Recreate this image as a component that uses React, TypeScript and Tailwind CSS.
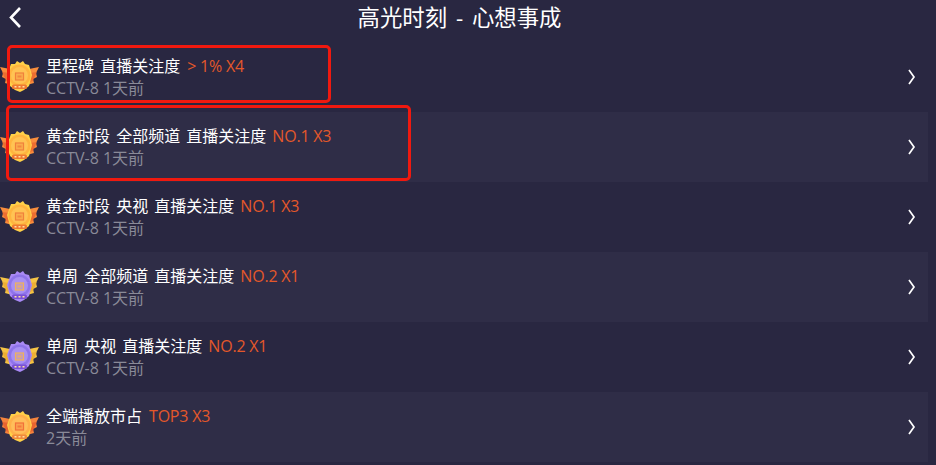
import React from "react";

type Tone = "gold" | "purple" | "sun";

const palette: Record<Tone, { wing: string; wingDark: string; rim: string; face: string; inner: string; band: string; glyph: string }> = {
  gold: { wing: "#f98d3c", wingDark: "#e8602c", rim: "#ffd048", face: "#ffb43f", inner: "#ffc353", band: "#f07a32", glyph: "#f0803c" },
  purple: { wing: "#f6c445", wingDark: "#e9a52e", rim: "#a989f5", face: "#8f74ea", inner: "#a890f3", band: "#7b52d6", glyph: "#f0b25a" },
  sun: { wing: "#f5843d", wingDark: "#e2572b", rim: "#ffd048", face: "#ffb04a", inner: "#ffbe5a", band: "#f08a3c", glyph: "#f2703a" },
};

function Medal({ tone }: { tone: Tone }) {
  const c = palette[tone];
  return (
    <svg width="40" height="36" viewBox="0 0 40 36" className="shrink-0">
      <path d="M0 8 L10 10 L12 26 L5 24 L6 20 L2 18 L3 14 Z" fill={c.wing} />
      <path d="M2 13 L10 14 L11 24 L6 22 Z" fill={c.wingDark} opacity="0.7" />
      <path d="M39 8 L29 10 L27 26 L34 24 L33 20 L37 18 L36 14 Z" fill={c.wing} />
      <path d="M37 13 L29 14 L28 24 L33 22 Z" fill={c.wingDark} opacity="0.7" />
      <path d="M11 5 L15 5 L17 2 L20 4 L23 2 L25 5 L29 6 L32 16 L29 27 L24 31 L20 33 L15 31 L10 27 L7 16 Z" fill={c.rim} />
      <circle cx="19.5" cy="16.5" r="11" fill={c.face} />
      <circle cx="19.5" cy="16.5" r="8.5" fill={c.inner} />
      <rect x="15.5" y="14" width="8" height="7" fill={c.glyph} fillOpacity="0.35" stroke={c.glyph} strokeWidth="1.2" />
      <rect x="17.5" y="16.5" width="4" height="2" fill={c.glyph} opacity="0.8" />
      <rect x="12" y="25.5" width="15" height="4.5" rx="1.5" fill={c.band} />
      <rect x="14.5" y="27" width="2" height="1.5" fill="#ffe0a0" />
      <rect x="18.5" y="27" width="2" height="1.5" fill="#ffe0a0" />
      <rect x="22.5" y="27" width="2" height="1.5" fill="#ffe0a0" />
    </svg>
  );
}

const rows: { title: string; tag: string; sub: string; tone: Tone; tagGap: string }[] = [
  { title: "里程碑 直播关注度", tag: "> 1% X4", sub: "CCTV-8 1天前", tone: "gold", tagGap: "ml-[7px]" },
  { title: "黄金时段 全部频道 直播关注度", tag: "NO.1 X3", sub: "CCTV-8 1天前", tone: "gold", tagGap: "ml-[6px]" },
  { title: "黄金时段 央视 直播关注度", tag: "NO.1 X3", sub: "CCTV-8 1天前", tone: "gold", tagGap: "ml-[6px]" },
  { title: "单周 全部频道 直播关注度", tag: "NO.2 X1", sub: "CCTV-8 1天前", tone: "purple", tagGap: "ml-[6px]" },
  { title: "单周 央视 直播关注度", tag: "NO.2 X1", sub: "CCTV-8 1天前", tone: "purple", tagGap: "ml-[6px]" },
  { title: "全端播放市占", tag: "TOP3 X3", sub: "2天前", tone: "sun", tagGap: "ml-[7px]" },
];

export default function App() {
  return (
    <div className="relative h-[465px] w-[936px] overflow-hidden bg-[#292741] font-['Open_Sans','Noto_Sans_CJK_SC',sans-serif] text-white">
      <header className="relative flex h-[42px] items-start justify-center pr-[17px]">
        <svg width="16" height="24" viewBox="0 0 16 24" className="absolute left-[7px] top-[4px]">
          <path d="M13 4 L4 13.5 L13 23" fill="none" stroke="white" strokeWidth="2.6" />
        </svg>
        <h1 className="text-[22.4px] leading-[36px] font-normal [word-spacing:3px]">高光时刻 - 心想事成</h1>
      </header>
      <ul className="w-[928px]">
        {rows.map((r, i) => (
          <li key={i} className={`flex h-[70px] items-center ${i % 2 === 1 ? "bg-[#2f2d47]" : ""}`}>
            <Medal tone={r.tone} />
            <div className="ml-[6px] min-w-0 flex-1">
              <div className="flex items-center text-[16px] leading-[22px]">
                <span className="[word-spacing:2px]">{r.title}</span>
                <span className={`${r.tagGap} tracking-[-0.2px] text-[#e4582a]`}>{r.tag}</span>
              </div>
              <div className="text-[16px] leading-[22px] text-[#8a8a98]">{r.sub}</div>
            </div>
            <svg width="10" height="16" viewBox="0 0 10 16" className="mr-[11px]">
              <path d="M2 1 L7 8 L2 15" fill="none" stroke="white" strokeWidth="1.7" />
            </svg>
          </li>
        ))}
      </ul>
      <div className="absolute left-[7px] top-[45px] h-[58px] w-[324px] rounded-[5px] border-[3px] border-[#f0190f]" />
      <div className="absolute left-[6px] top-[105px] h-[76px] w-[405px] rounded-[5px] border-[3px] border-[#f0190f]" />
    </div>
  );
}
